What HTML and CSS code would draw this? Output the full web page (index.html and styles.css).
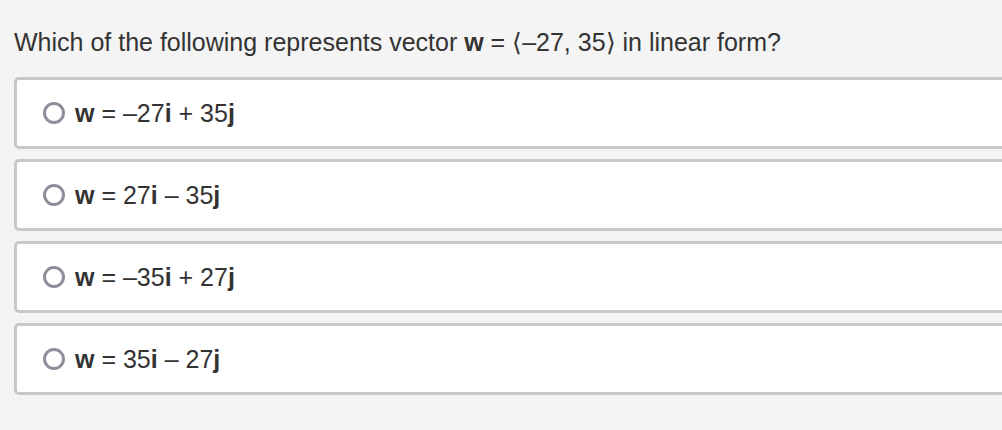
FILE: index.html
```html
<!DOCTYPE html>
<html>
<head>
<meta charset="utf-8">
<link rel="stylesheet" href="styles.css">
</head>
<body>
<div class="page">
  <p class="question">Which of the following represents vector <b>w</b> = ⟨–27, 35⟩ in linear form?</p>
  <div class="options">
    <label class="option"><span class="radio"></span><span class="text"><b>w</b> = –27<b>i</b> + 35<b>j</b></span></label>
    <label class="option"><span class="radio"></span><span class="text"><b>w</b> = 27<b>i</b> – 35<b>j</b></span></label>
    <label class="option"><span class="radio"></span><span class="text"><b>w</b> = –35<b>i</b> + 27<b>j</b></span></label>
    <label class="option"><span class="radio"></span><span class="text"><b>w</b> = 35<b>i</b> – 27<b>j</b></span></label>
  </div>
</div>
</body>
</html>
```
FILE: styles.css
```css
html, body {
  margin: 0;
  padding: 0;
  background: #f4f4f4;
  overflow: hidden;
}
.page {
  padding: 27px 0 0 14px;
  font-family: "Liberation Sans", Arial, sans-serif;
  color: #333;
}
.question {
  margin: 0 0 20px 0;
  font-size: 25px;
  line-height: 30px;
}
.options {
  display: flex;
  flex-direction: column;
  gap: 10px;
  margin-right: -30px;
}
.option {
  display: flex;
  align-items: center;
  height: 66px;
  border: 3px solid #c8c8c8;
  border-radius: 5px;
  background: #fff;
  padding-left: 26px;
  font-size: 25px;
}
.radio {
  width: 16px;
  height: 16px;
  border: 3px solid #8f8d99;
  border-radius: 50%;
  margin-right: 10px;
  flex: none;
}
.text b {
  font-weight: bold;
}
```
